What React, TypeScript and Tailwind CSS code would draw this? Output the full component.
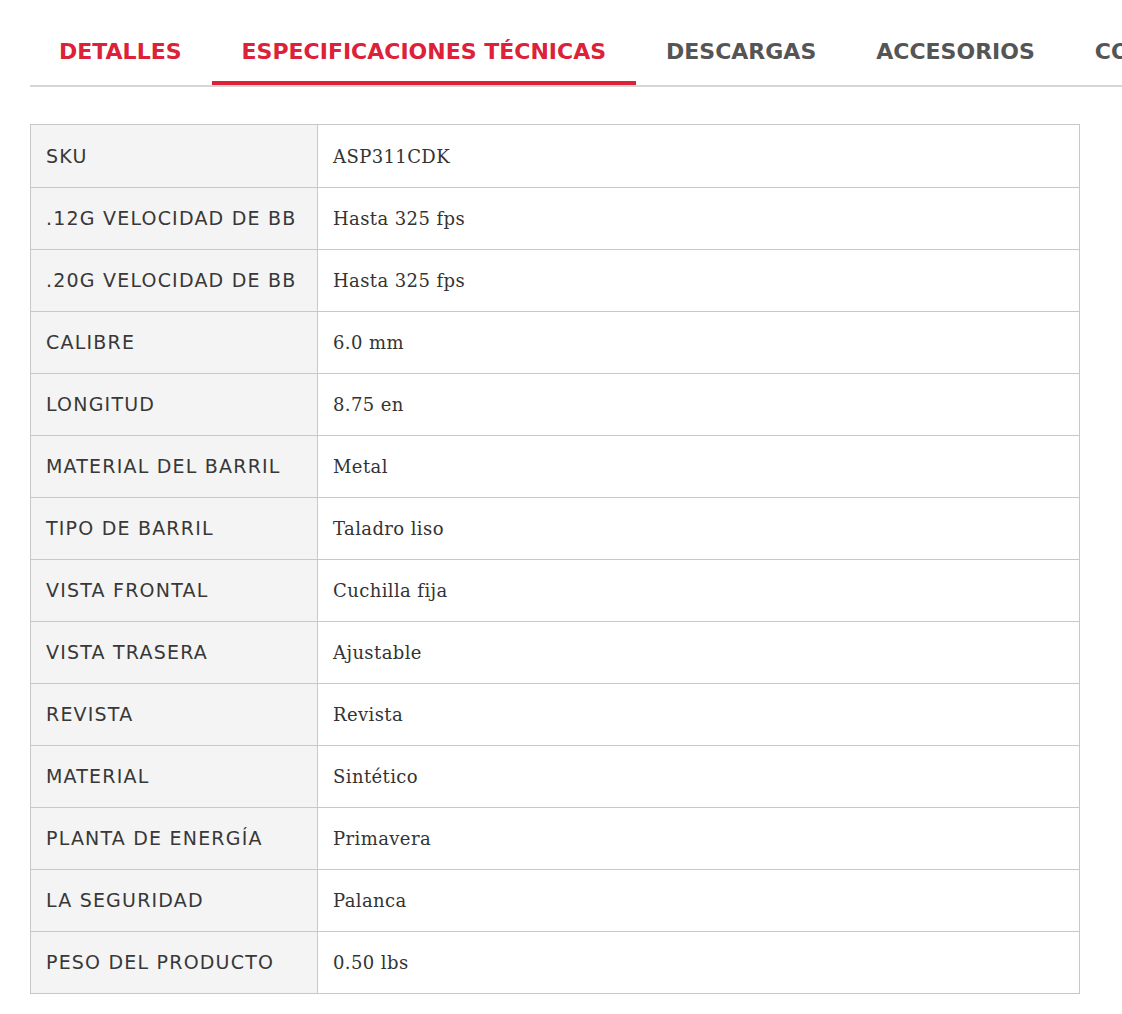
import React from 'react';

const TABS = ['DETALLES', 'ESPECIFICACIONES TÉCNICAS', 'DESCARGAS', 'ACCESORIOS', 'COMPATIBLES'];

const SPECS: [string, string][] = [
  ['SKU', 'ASP311CDK'],
  ['.12G VELOCIDAD DE BB', 'Hasta 325 fps'],
  ['.20G VELOCIDAD DE BB', 'Hasta 325 fps'],
  ['CALIBRE', '6.0 mm'],
  ['LONGITUD', '8.75 en'],
  ['MATERIAL DEL BARRIL', 'Metal'],
  ['TIPO DE BARRIL', 'Taladro liso'],
  ['VISTA FRONTAL', 'Cuchilla fija'],
  ['VISTA TRASERA', 'Ajustable'],
  ['REVISTA', 'Revista'],
  ['MATERIAL', 'Sintético'],
  ['PLANTA DE ENERGÍA', 'Primavera'],
  ['LA SEGURIDAD', 'Palanca'],
  ['PESO DEL PRODUCTO', '0.50 lbs'],
];

export default function App() {
  return (
    <div className="w-[1122px] h-[1014px] bg-white overflow-hidden">
      <div className="pl-[30px] pt-[21px]">
        <div className="flex border-b-2 border-[#d6d6d6] whitespace-nowrap w-[1200px]">
          {TABS.map((t, i) => (
            <div
              key={t}
              className={
                i === 1
                  ? "px-[30px] h-[64px] flex items-center text-[#dc2138] border-b-[4px] border-[#dc2138] -mb-[2px]"
                  : i === 0
                  ? "pl-[29px] pr-[30px] h-[64px] flex items-center text-[#dc2138] pb-[4px]"
                  : "px-[30px] h-[64px] flex items-center text-[#555555] pb-[4px]"
              }
            >
              <span className="font-['DejaVu_Sans',sans-serif] font-bold text-[22px] tracking-[0px]">{t}</span>
            </div>
          ))}
        </div>
      </div>

      <div className="ml-[30px] mt-[37px] w-[1050px] border border-[#c8c8c8]">
        {SPECS.map(([k, v], i) => (
          <div key={k} className={`flex h-[62px] ${i > 0 ? 'border-t border-[#c8c8c8]' : ''}`}>
            <div className="w-[287px] shrink-0 bg-[#f4f4f4] border-r border-[#c8c8c8] flex items-center pl-[15px] text-[#383838] font-['DejaVu_Sans',sans-serif] text-[19px] tracking-[1.2px]">
              {k}
            </div>
            <div className="flex-1 flex items-center pl-[15px] text-[#333333] font-['DejaVu_Serif',serif] text-[18px] tracking-[0.4px]">
              {v}
            </div>
          </div>
        ))}
      </div>
    </div>
  );
}
